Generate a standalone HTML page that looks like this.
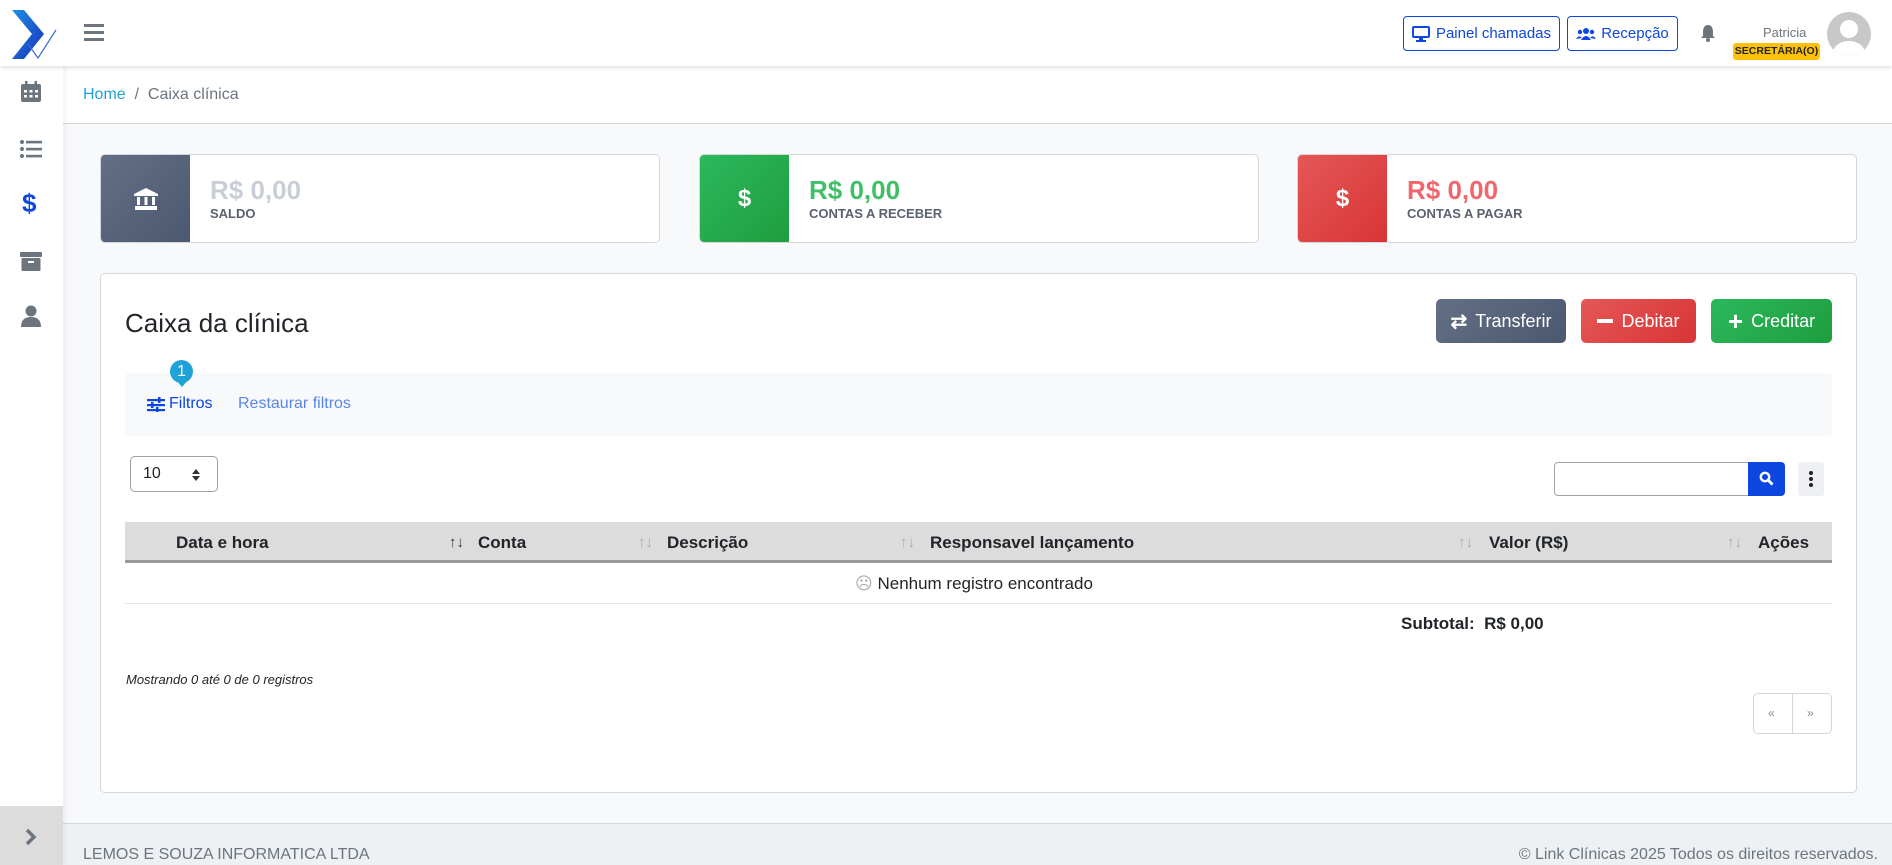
<!DOCTYPE html>
<html><head><meta charset="utf-8"><style>
*{box-sizing:border-box;margin:0;padding:0}
body{width:1892px;height:865px;overflow:hidden;background:#f8f9fb;font-family:"Liberation Sans",sans-serif;position:relative;color:#212529}
.abs{position:absolute}
.side{left:0;top:0;width:63px;height:865px;background:#fff;box-shadow:2px 0 6px rgba(0,0,0,.06);z-index:3}
.top{left:0;top:0;width:1892px;height:66px;background:#fff;box-shadow:0 2px 4px rgba(0,0,0,.12);z-index:4}
.card{background:#fff;border:1px solid #d3d6db;border-radius:5px;overflow:hidden}
.ib{position:absolute;left:0;top:0;bottom:0;width:89px;display:flex;align-items:center;justify-content:center;color:#fff;font-weight:bold;font-size:24px}
.amt{position:absolute;left:109px;top:20px;font-size:26px;font-weight:bold}
.lbl{position:absolute;left:109px;top:51px;font-size:13px;font-weight:bold;color:#5a6270}
.btn{position:absolute;top:299px;height:44px;border-radius:5px;color:#fff;font-size:18px;display:flex;align-items:center;justify-content:center;gap:8px}
.hd{position:absolute;top:533px;font-size:17px;font-weight:bold;color:#212529}
.si{position:absolute;top:534px;font-size:15px;color:#aaa}
</style></head><body>
<div class="abs top">
 <svg class="abs" style="left:10px;top:8px" width="48" height="54" viewBox="0 0 48 54"><defs><linearGradient id="g" x1="0" y1="0" x2="1" y2="1"><stop offset="0" stop-color="#1d8fe0"/><stop offset="1" stop-color="#1a2fc0"/></linearGradient></defs><path d="M2 2 L14 2 L34 26 L14 51 L2 51 L22 26 Z" fill="url(#g)"/><path d="M18 36 L28 50 L46 22" fill="none" stroke="#3a6fd0" stroke-width="1.2"/></svg>
 <div class="abs" style="left:84px;top:24px;width:20px"><div style="height:3px;background:#6c757d;margin-bottom:4px"></div><div style="height:3px;background:#6c757d;margin-bottom:4px"></div><div style="height:3px;background:#6c757d"></div></div>
 <div class="abs" style="left:1403px;top:16px;width:157px;height:35px;border:1.5px solid #0d47e0;border-radius:4px;color:#0d47e0;font-size:15px;display:flex;align-items:center;justify-content:center;gap:6px"><svg width="18" height="16" viewBox="0 0 18 16"><rect x="1" y="1" width="16" height="10" rx="1" fill="none" stroke="#0d47e0" stroke-width="2"/><rect x="7" y="11" width="4" height="3" fill="#0d47e0"/><rect x="4" y="14" width="10" height="2" fill="#0d47e0"/></svg>Painel chamadas</div>
 <div class="abs" style="left:1567px;top:16px;width:111px;height:35px;border:1.5px solid #0d47e0;border-radius:4px;color:#0d47e0;font-size:15px;display:flex;align-items:center;justify-content:center;gap:5px"><svg width="20" height="14" viewBox="0 0 20 14"><circle cx="10" cy="4" r="3" fill="#0d47e0"/><circle cx="4" cy="5" r="2.2" fill="#0d47e0"/><circle cx="16" cy="5" r="2.2" fill="#0d47e0"/><path d="M5 13 Q10 5 15 13Z M0 12 Q3 7 6 11Z M14 11 Q17 7 20 12Z" fill="#0d47e0"/></svg>Recepção</div>
 <svg class="abs" style="left:1700px;top:24px" width="16" height="18" viewBox="0 0 16 18"><path d="M8 1 C4 1 3 5 3 8 L3 12 L1 14 L15 14 L13 12 L13 8 C13 5 12 1 8 1Z" fill="#6c757d"/><circle cx="8" cy="16" r="2" fill="#6c757d"/></svg>
 <div class="abs" style="left:1763px;top:25px;font-size:13px;color:#6c757d">Patricia</div>
 <div class="abs" style="left:1733px;top:43px;width:87px;height:17px;background:#ffc107;border-radius:3px;font-size:10.5px;font-weight:bold;color:#212529;text-align:center;line-height:17px">SECRETÁRIA(O)</div>
 <div class="abs" style="left:1827px;top:12px;width:44px;height:44px;border-radius:50%;background:#c8c8c8;overflow:hidden"><div class="abs" style="left:13px;top:8px;width:18px;height:18px;border-radius:50%;background:#fff"></div><div class="abs" style="left:6px;top:29px;width:32px;height:24px;border-radius:50%;background:#fff"></div></div>
</div>
<div class="abs side">
 <svg class="abs" style="left:21px;top:81px" width="20" height="21" viewBox="0 0 20 21"><rect x="4" y="0" width="2.5" height="4" fill="#6c757d"/><rect x="13.5" y="0" width="2.5" height="4" fill="#6c757d"/><rect x="0" y="3" width="20" height="18" rx="2" fill="#6c757d"/><g fill="#fff"><rect x="3" y="9" width="3" height="2.5"/><rect x="8.5" y="9" width="3" height="2.5"/><rect x="14" y="9" width="3" height="2.5"/><rect x="3" y="14" width="3" height="2.5"/><rect x="8.5" y="14" width="3" height="2.5"/><rect x="14" y="14" width="3" height="2.5"/></g></svg>
 <svg class="abs" style="left:20px;top:140px" width="22" height="18" viewBox="0 0 22 18"><g fill="#6c757d"><circle cx="2" cy="2" r="2"/><circle cx="2" cy="9" r="2"/><circle cx="2" cy="16" r="2"/><rect x="6" y="0.8" width="16" height="2.6"/><rect x="6" y="7.8" width="16" height="2.6"/><rect x="6" y="14.8" width="16" height="2.6"/></g></svg>
 <div class="abs" style="left:22px;top:188px;font-size:26px;font-weight:bold;color:#0d47e0">$</div>
 <svg class="abs" style="left:20px;top:252px" width="22" height="19" viewBox="0 0 22 19"><rect x="0" y="0" width="22" height="5" rx="1" fill="#6c757d"/><rect x="1.5" y="6" width="19" height="13" rx="1" fill="#6c757d"/><rect x="8" y="9" width="6" height="2" fill="#fff"/></svg>
 <svg class="abs" style="left:21px;top:305px" width="20" height="22" viewBox="0 0 20 22"><circle cx="10" cy="6" r="5.5" fill="#6c757d"/><path d="M0 22 Q0 12 10 12 Q20 12 20 22Z" fill="#6c757d"/></svg>
 <div class="abs" style="left:0;top:806px;width:63px;height:59px;background:#dcdcdc"><svg class="abs" style="left:25px;top:22px" width="12" height="18" viewBox="0 0 12 18"><path d="M2 2 L9 9 L2 16" fill="none" stroke="#6c757d" stroke-width="3.5"/></svg></div>
</div>
<div class="abs" style="left:63px;top:66px;width:1829px;height:58px;background:#fff;border-bottom:1px solid #d3d6db"></div>
<div class="abs" style="left:83px;top:86px;font-size:16px;color:#6c757d"><span style="color:#1fa2d8">Home</span> &nbsp;/&nbsp; Caixa clínica</div>

<div class="abs card" style="left:100px;top:154px;width:560px;height:89px"><div class="ib" style="background:linear-gradient(135deg,#636f84,#4b5870)"><svg width="24" height="22" viewBox="0 0 24 22"><path d="M12 0 L24 6 L24 8 L0 8 L0 6Z" fill="#fff"/><rect x="3" y="9" width="3" height="8" fill="#fff"/><rect x="10.5" y="9" width="3" height="8" fill="#fff"/><rect x="18" y="9" width="3" height="8" fill="#fff"/><rect x="1" y="18" width="22" height="4" fill="#fff"/></svg></div><div class="amt" style="color:#c9ced6">R$ 0,00</div><div class="lbl">SALDO</div></div>
<div class="abs card" style="left:699px;top:154px;width:560px;height:89px"><div class="ib" style="background:linear-gradient(135deg,#2cb85c,#1e9e3e)">$</div><div class="amt" style="color:#3fbf66">R$ 0,00</div><div class="lbl">CONTAS A RECEBER</div></div>
<div class="abs card" style="left:1297px;top:154px;width:560px;height:89px"><div class="ib" style="background:linear-gradient(135deg,#e55757,#d83535)">$</div><div class="amt" style="color:#f0666c">R$ 0,00</div><div class="lbl">CONTAS A PAGAR</div></div>

<div class="abs card" style="left:100px;top:273px;width:1757px;height:520px"></div>
<div class="abs" style="left:125px;top:308px;font-size:26px;color:#212529">Caixa da clínica</div>
<div class="btn" style="left:1436px;width:130px;background:linear-gradient(135deg,#636f84,#4b5870)"><span style="font-size:20px;font-weight:bold">⇄</span>Transferir</div>
<div class="btn" style="left:1581px;width:115px;background:linear-gradient(135deg,#e55757,#d83535)"><span style="display:inline-block;width:16px;height:4px;background:#fff"></span>Debitar</div>
<div class="btn" style="left:1711px;width:121px;background:linear-gradient(135deg,#2cb85c,#1e9e3e)"><span style="font-size:26px;font-weight:bold;line-height:1">+</span>Creditar</div>

<div class="abs" style="left:125px;top:373px;width:1707px;height:63px;background:#f8f9fb;border-radius:4px"></div>
<div class="abs" style="left:170px;top:360px;width:23px;height:23px;border-radius:50%;background:#1fa2d8;color:#fff;font-size:16px;text-align:center;line-height:23px">1</div>
<div class="abs" style="left:176px;top:380px;width:0;height:0;border-left:6px solid transparent;border-right:6px solid transparent;border-top:7px solid #1fa2d8"></div>
<svg class="abs" style="left:147px;top:397px" width="18" height="15" viewBox="0 0 18 15"><g fill="#0d47e0"><rect y="2" width="18" height="2.2"/><rect y="7" width="18" height="2.2"/><rect y="12" width="18" height="2.2"/><rect x="11" y="0" width="2.5" height="6"/><rect x="4" y="5" width="2.5" height="6"/><rect x="9" y="10" width="2.5" height="5"/></g></svg>
<div class="abs" style="left:169px;top:395px;font-size:16px;color:#0d47e0">Filtros</div>
<div class="abs" style="left:238px;top:395px;font-size:16px;color:#5a86e8">Restaurar filtros</div>

<div class="abs" style="left:130px;top:456px;width:88px;height:36px;border:1px solid #9aa0a8;border-radius:5px;background:#fff"><span class="abs" style="left:12px;top:8px;font-size:16px">10</span><svg class="abs" style="left:60px;top:11px" width="10" height="14" viewBox="0 0 10 14"><path d="M1 6 L5 1 L9 6Z M1 8 L5 13 L9 8Z" fill="#333"/></svg></div>
<div class="abs" style="left:1554px;top:462px;width:195px;height:34px;border:1px solid #a0a4aa;border-radius:4px 0 0 4px;background:#fff"></div>
<div class="abs" style="left:1748px;top:462px;width:37px;height:34px;background:#0d47e0;border-radius:0 4px 4px 0"><svg class="abs" style="left:11px;top:9px" width="15" height="15" viewBox="0 0 15 15"><circle cx="6" cy="6" r="4.2" fill="none" stroke="#fff" stroke-width="2.4"/><path d="M9 9 L13.5 13.5" stroke="#fff" stroke-width="2.8"/></svg></div>
<div class="abs" style="left:1798px;top:462px;width:26px;height:34px;background:#eef0f3;border-radius:3px"><div class="abs" style="left:11px;top:9px;width:4px;height:4px;border-radius:50%;background:#222"></div><div class="abs" style="left:11px;top:15px;width:4px;height:4px;border-radius:50%;background:#222"></div><div class="abs" style="left:11px;top:21px;width:4px;height:4px;border-radius:50%;background:#222"></div></div>

<div class="abs" style="left:125px;top:522px;width:1707px;height:41px;background:#dcdcdc;border-bottom:3px solid #9a9a9a"></div>
<div class="hd" style="left:176px">Data e hora</div><div class="si" style="left:449px;color:#333">↑↓</div>
<div class="hd" style="left:478px">Conta</div><div class="si" style="left:638px">↑↓</div>
<div class="hd" style="left:667px">Descrição</div><div class="si" style="left:900px">↑↓</div>
<div class="hd" style="left:930px">Responsavel lançamento</div><div class="si" style="left:1458px">↑↓</div>
<div class="hd" style="left:1489px">Valor (R$)</div><div class="si" style="left:1727px">↑↓</div>
<div class="hd" style="left:1758px">Ações</div>
<div class="abs" style="left:125px;top:603px;width:1707px;height:1px;background:#e6e6e6"></div>
<div class="abs" style="left:855px;top:574px;font-size:17px;color:#212529"><span style="color:#aaa">☹</span> Nenhum registro encontrado</div>
<div class="abs" style="left:1401px;top:614px;font-size:17px;font-weight:bold">Subtotal:&nbsp; R$ 0,00</div>
<div class="abs" style="left:126px;top:672px;font-size:13px;font-style:italic;color:#212529">Mostrando 0 até 0 de 0 registros</div>
<div class="abs" style="left:1753px;top:693px;width:79px;height:41px;border:1px solid #d3d6db;border-radius:5px;background:#fff"><div class="abs" style="left:38px;top:0;width:1px;height:39px;background:#d3d6db"></div><span class="abs" style="left:14px;top:12px;font-size:12px;color:#888">«</span><span class="abs" style="left:53px;top:12px;font-size:12px;color:#888">»</span></div>

<div class="abs" style="left:63px;top:823px;width:1829px;height:42px;background:#eef1f4;border-top:1px solid #d3d6db"></div>
<div class="abs" style="left:83px;top:846px;font-size:16px;color:#6c757d">LEMOS E SOUZA INFORMATICA LTDA</div>
<div class="abs" style="right:14px;top:846px;font-size:16px;color:#6c757d">© Link Clínicas 2025 Todos os direitos reservados.</div>
</body></html>
